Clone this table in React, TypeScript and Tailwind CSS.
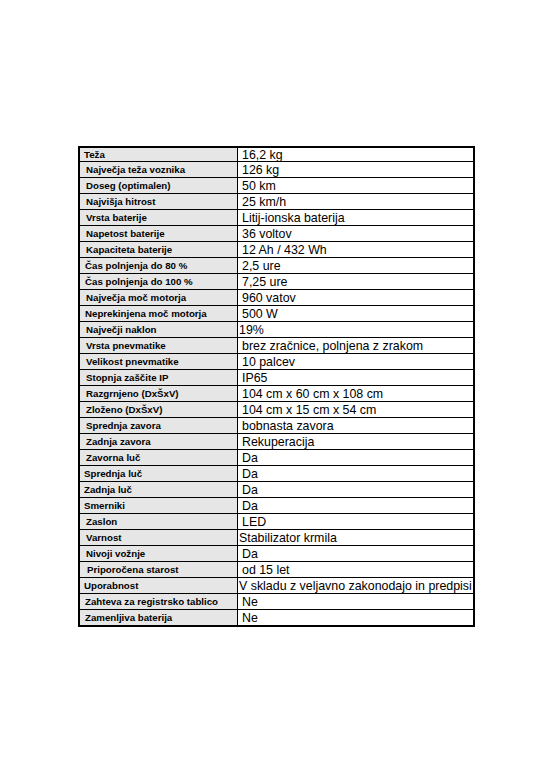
const rows: { label: string; value: string; lp: string; vp: string }[] = [
  { label: 'Teža', value: '16,2 kg', lp: 'pl-[4px]', vp: 'pl-[4px]' },
  { label: 'Največja teža voznika', value: '126 kg', lp: 'pl-[6px]', vp: 'pl-[4px]' },
  { label: 'Doseg (optimalen)', value: '50 km', lp: 'pl-[6px]', vp: 'pl-[4px]' },
  { label: 'Najvišja hitrost', value: '25 km/h', lp: 'pl-[6px]', vp: 'pl-[4px]' },
  { label: 'Vrsta baterije', value: 'Litij-ionska baterija', lp: 'pl-[6px]', vp: 'pl-[4px]' },
  { label: 'Napetost baterije', value: '36 voltov', lp: 'pl-[6px]', vp: 'pl-[4px]' },
  { label: 'Kapaciteta baterije', value: '12 Ah / 432 Wh', lp: 'pl-[6px]', vp: 'pl-[4px]' },
  { label: 'Čas polnjenja do 80 %', value: '2,5 ure', lp: 'pl-[5px]', vp: 'pl-[4px]' },
  { label: 'Čas polnjenja do 100 %', value: '7,25 ure', lp: 'pl-[5px]', vp: 'pl-[4px]' },
  { label: 'Največja moč motorja', value: '960 vatov', lp: 'pl-[6px]', vp: 'pl-[4px]' },
  { label: 'Neprekinjena moč motorja', value: '500 W', lp: 'pl-[5px]', vp: 'pl-[4px]' },
  { label: 'Največji naklon', value: '19%', lp: 'pl-[6px]', vp: 'pl-[1px]' },
  { label: 'Vrsta pnevmatike', value: 'brez zračnice, polnjena z zrakom', lp: 'pl-[6px]', vp: 'pl-[4px]' },
  { label: 'Velikost pnevmatike', value: '10 palcev', lp: 'pl-[6px]', vp: 'pl-[4px]' },
  { label: 'Stopnja zaščite IP', value: 'IP65', lp: 'pl-[6px]', vp: 'pl-[4px]' },
  { label: 'Razgrnjeno (DxŠxV)', value: '104 cm x 60 cm x 108 cm', lp: 'pl-[6px]', vp: 'pl-[4px]' },
  { label: 'Zloženo (DxŠxV)', value: '104 cm x 15 cm x 54 cm', lp: 'pl-[6px]', vp: 'pl-[4px]' },
  { label: 'Sprednja zavora', value: 'bobnasta zavora', lp: 'pl-[6px]', vp: 'pl-[4px]' },
  { label: 'Zadnja zavora', value: 'Rekuperacija', lp: 'pl-[6px]', vp: 'pl-[4px]' },
  { label: 'Zavorna luč', value: 'Da', lp: 'pl-[6px]', vp: 'pl-[4px]' },
  { label: 'Sprednja luč', value: 'Da', lp: 'pl-[4px]', vp: 'pl-[4px]' },
  { label: 'Zadnja luč', value: 'Da', lp: 'pl-[4px]', vp: 'pl-[4px]' },
  { label: 'Smerniki', value: 'Da', lp: 'pl-[4px]', vp: 'pl-[4px]' },
  { label: 'Zaslon', value: 'LED', lp: 'pl-[6px]', vp: 'pl-[4px]' },
  { label: 'Varnost', value: 'Stabilizator krmila', lp: 'pl-[6px]', vp: 'pl-[1px]' },
  { label: 'Nivoji vožnje', value: 'Da', lp: 'pl-[6px]', vp: 'pl-[4px]' },
  { label: 'Priporočena starost', value: 'od 15 let', lp: 'pl-[7px]', vp: 'pl-[4px]' },
  { label: 'Uporabnost', value: 'V skladu z veljavno zakonodajo in predpisi', lp: 'pl-[4px]', vp: 'pl-[1px]' },
  { label: 'Zahteva za registrsko tablico', value: 'Ne', lp: 'pl-[5px]', vp: 'pl-[4px]' },
  { label: 'Zamenljiva baterija', value: 'Ne', lp: 'pl-[5px]', vp: 'pl-[4px]' },
]

export default function App() {
  return (
    <div className="min-h-[778px] w-[554px] bg-white pt-[146px] pl-[78px] font-['Liberation_Sans',Arial,sans-serif] text-black">
      {/* Spec sheet */}
      <div className="w-[397px] border-2 border-black">
        {rows.map((row, i) => (
          <div
            key={row.label}
            className={`flex ${i === 0 ? 'h-[13px]' : 'h-[16px] border-t border-black'}`}
          >
            <div
              className={`flex w-[157px] shrink-0 items-center overflow-hidden whitespace-nowrap bg-[#e6e6e6] text-[9.7px] font-bold leading-none ${row.lp}`}
            >
              {row.label}
            </div>
            <div
              className={`flex flex-1 items-center overflow-hidden whitespace-nowrap border-l border-black pt-px text-[12.4px] leading-none ${row.vp}`}
            >
              {row.value}
            </div>
          </div>
        ))}
      </div>
    </div>
  )
}
